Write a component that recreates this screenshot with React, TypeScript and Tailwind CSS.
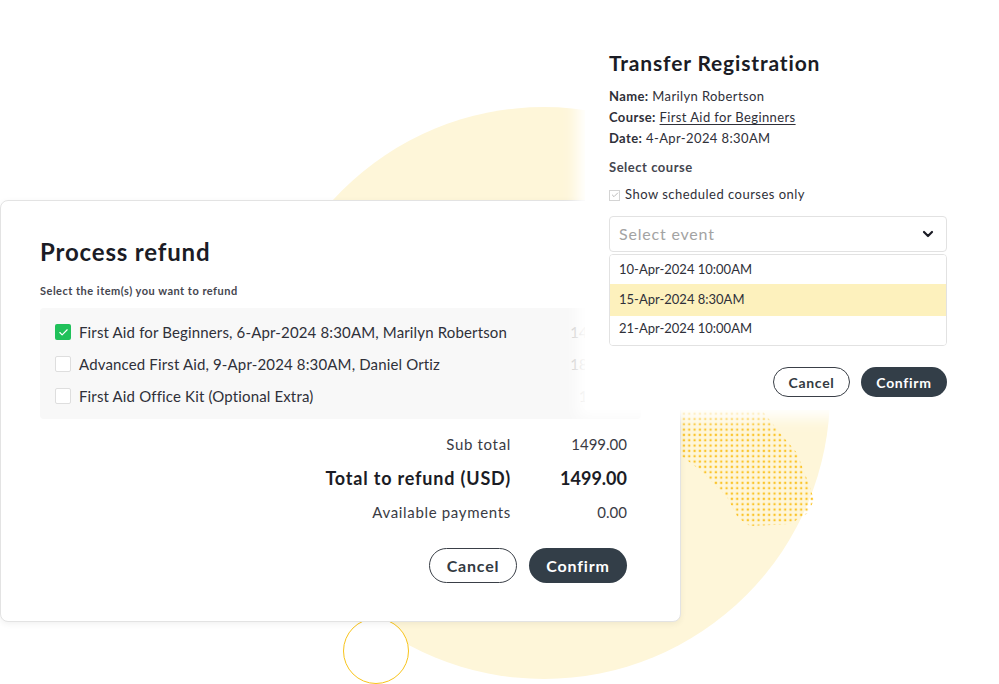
import { Check } from 'lucide-react'

const items = [
  { label: 'First Aid for Beginners, 6-Apr-2024 8:30AM, Marilyn Robertson', amount: '1499.00', checked: true },
  { label: 'Advanced First Aid, 9-Apr-2024 8:30AM, Daniel Ortiz', amount: '1899.00', checked: false },
  { label: 'First Aid Office Kit (Optional Extra)', amount: '149.00', checked: false },
]

const events = [
  { label: '10-Apr-2024 10:00AM', h: 'h-[29px]', active: false },
  { label: '15-Apr-2024 8:30AM', h: 'h-[32px]', active: true },
  { label: '21-Apr-2024 10:00AM', h: 'h-[29px] pb-[3px]', active: false },
]

function Dots() {
  // dotted blob peeking out between the two cards
  return (
    <svg className="absolute left-[660px] top-[395px]" width="160" height="135" viewBox="0 0 160 135">
      <defs>
        <pattern id="dots" width="5.33" height="5.33" patternUnits="userSpaceOnUse">
          <rect x="1.5" y="1.5" width="2.2" height="2.2" fill="#fbc42a" />
        </pattern>
        <clipPath id="blob">
          <polygon points="0,0 90,0 120,38 137,58 150,92 154,105 148,118 130,129 90,131 78,123 67,102 57,92 40,75 20,60" />
        </clipPath>
      </defs>
      <rect width="160" height="135" fill="url(#dots)" clipPath="url(#blob)" />
    </svg>
  )
}

function RefundCard() {
  return (
    <div className="absolute left-0 top-[200px] w-[681px] h-[422px] rounded-lg border border-[#e3e3e3] bg-white pl-[39px] pt-[36px] shadow-[0_2px_6px_rgba(0,0,0,0.06)]">
      <h2 className="text-[24px] leading-[30px] font-bold tracking-[0.035em] text-[#1b1c25]">Process refund</h2>
      <p className="mt-[16px] text-[11px] leading-[16px] font-bold tracking-[0.045em] text-[#45464f]">Select the item(s) you want to refund</p>

      <div className="mt-[9px] w-[601px] rounded bg-[#f8f8f8] pl-[15px] pr-[15px] pt-[8px] pb-[7px]">
        {items.map((it) => (
          <div key={it.label} className="flex h-[32px] items-center">
            {it.checked ? (
              <span className="flex h-[16px] w-[16px] shrink-0 items-center justify-center rounded-[2px] bg-[#20c15a]">
                <Check size={11} strokeWidth={2.5} className="text-white" />
              </span>
            ) : (
              <span className="h-[16px] w-[16px] shrink-0 rounded-[2px] border border-[#dedede] bg-white" />
            )}
            <span className="ml-[8px] text-[15px] tracking-[0.01em] text-[#2f3039]">{it.label}</span>
            <span className="ml-auto text-[15px] text-[#c9c9c9]">{it.amount}</span>
          </div>
        ))}
      </div>

      <div className="mt-[8px] w-[587px]">
        <div className="flex h-[34px] items-center justify-end text-[15px] text-[#3a3b44]">
          <span className="tracking-[0.045em]">Sub total</span>
          <span className="w-[116px] text-right">1499.00</span>
        </div>
        <div className="flex h-[34px] items-center justify-end text-[18px] font-bold text-[#1b1c25]">
          <span className="tracking-[0.045em]">Total to refund (USD)</span>
          <span className="w-[116px] text-right">1499.00</span>
        </div>
        <div className="flex h-[34px] items-center justify-end text-[15px] text-[#3a3b44]">
          <span className="tracking-[0.045em]">Available payments</span>
          <span className="w-[116px] text-right">0.00</span>
        </div>
        <div className="mt-[19px] flex justify-end gap-[12px]">
          <button className="h-[35px] w-[88px] rounded-full border border-[#3a3f47] bg-white text-[16px] font-bold tracking-[0.05em] text-[#333a42]">Cancel</button>
          <button className="h-[35px] w-[98px] rounded-full bg-[#333e48] text-[16px] font-bold tracking-[0.05em] text-white">Confirm</button>
        </div>
      </div>
    </div>
  )
}

function TransferCard() {
  return (
    <div className="absolute left-[585px] top-0 w-[414px] h-[410px] bg-white pl-[24px] pt-[49px] shadow-[0_0_14px_8px_#fff]">
      <h2 className="text-[21px] leading-[28px] font-bold tracking-[0.04em] text-[#1b1c25]">Transfer Registration</h2>
      <div className="mt-[9px] text-[13px] leading-[21px] tracking-[0.03em] text-[#2f3039]">
        <p><span className="font-bold">Name:</span> Marilyn Robertson</p>
        <p><span className="font-bold">Course:</span> <span className="underline underline-offset-2">First Aid for Beginners</span></p>
        <p><span className="font-bold">Date:</span> 4-Apr-2024 8:30AM</p>
      </div>
      <p className="mt-[8px] text-[13px] leading-[20px] font-bold tracking-[0.04em] text-[#45464f]">Select course</p>
      <label className="mt-[8px] flex h-[20px] items-center gap-[5px] text-[13px] tracking-[0.037em] text-[#2f3039]">
        <span className="flex h-[11px] w-[11px] items-center justify-center border border-[#d4d4d4] bg-white">
          <Check size={8} strokeWidth={2} className="text-[#9a9a9a]" />
        </span>
        Show scheduled courses only
      </label>

      <div className="mt-[11px] w-[338px]">
        <div className="flex h-[36px] items-center justify-between rounded border border-[#e2e2e2] pl-[9px] pr-[12px]">
          <span className="text-[16px] tracking-[0.05em] text-[#a3a3a3]">Select event</span>
          <svg width="12" height="8" viewBox="0 0 12 8">
            <path d="M2 2l4 4 4-4" fill="none" stroke="#1b1c25" strokeWidth="2.2" strokeLinecap="round" strokeLinejoin="round" />
          </svg>
        </div>
        <div className="mt-[2px] overflow-hidden rounded border border-[#e2e2e2]">
          {events.map((e) => (
            <div key={e.label} className={`${e.h} flex items-center pl-[9px] text-[13px] text-[#2f3039] ${e.active ? 'bg-[#fdf1bd]' : 'bg-white'}`}>
              {e.label}
            </div>
          ))}
        </div>
        <div className="mt-[21px] flex justify-end gap-[11px]">
          <button className="h-[30px] w-[77px] rounded-full border border-[#3a3f47] bg-white text-[14px] font-bold tracking-[0.05em] text-[#333a42]">Cancel</button>
          <button className="h-[30px] w-[86px] rounded-full bg-[#333e48] text-[14px] font-bold tracking-[0.05em] text-white">Confirm</button>
        </div>
      </div>
    </div>
  )
}

export default function App() {
  return (
    <div className="relative h-[684px] w-[999px] overflow-hidden bg-white font-['Lato',sans-serif]">
      <div className="absolute left-[258px] top-[107px] h-[572px] w-[572px] rounded-full bg-[#fef6d9]" />
      <Dots />
      <div className="absolute left-[343px] top-[618px] h-[66px] w-[66px] rounded-full border-[1.5px] border-[#f8c41c] bg-white" />
      <RefundCard />
      <TransferCard />
    </div>
  )
}
